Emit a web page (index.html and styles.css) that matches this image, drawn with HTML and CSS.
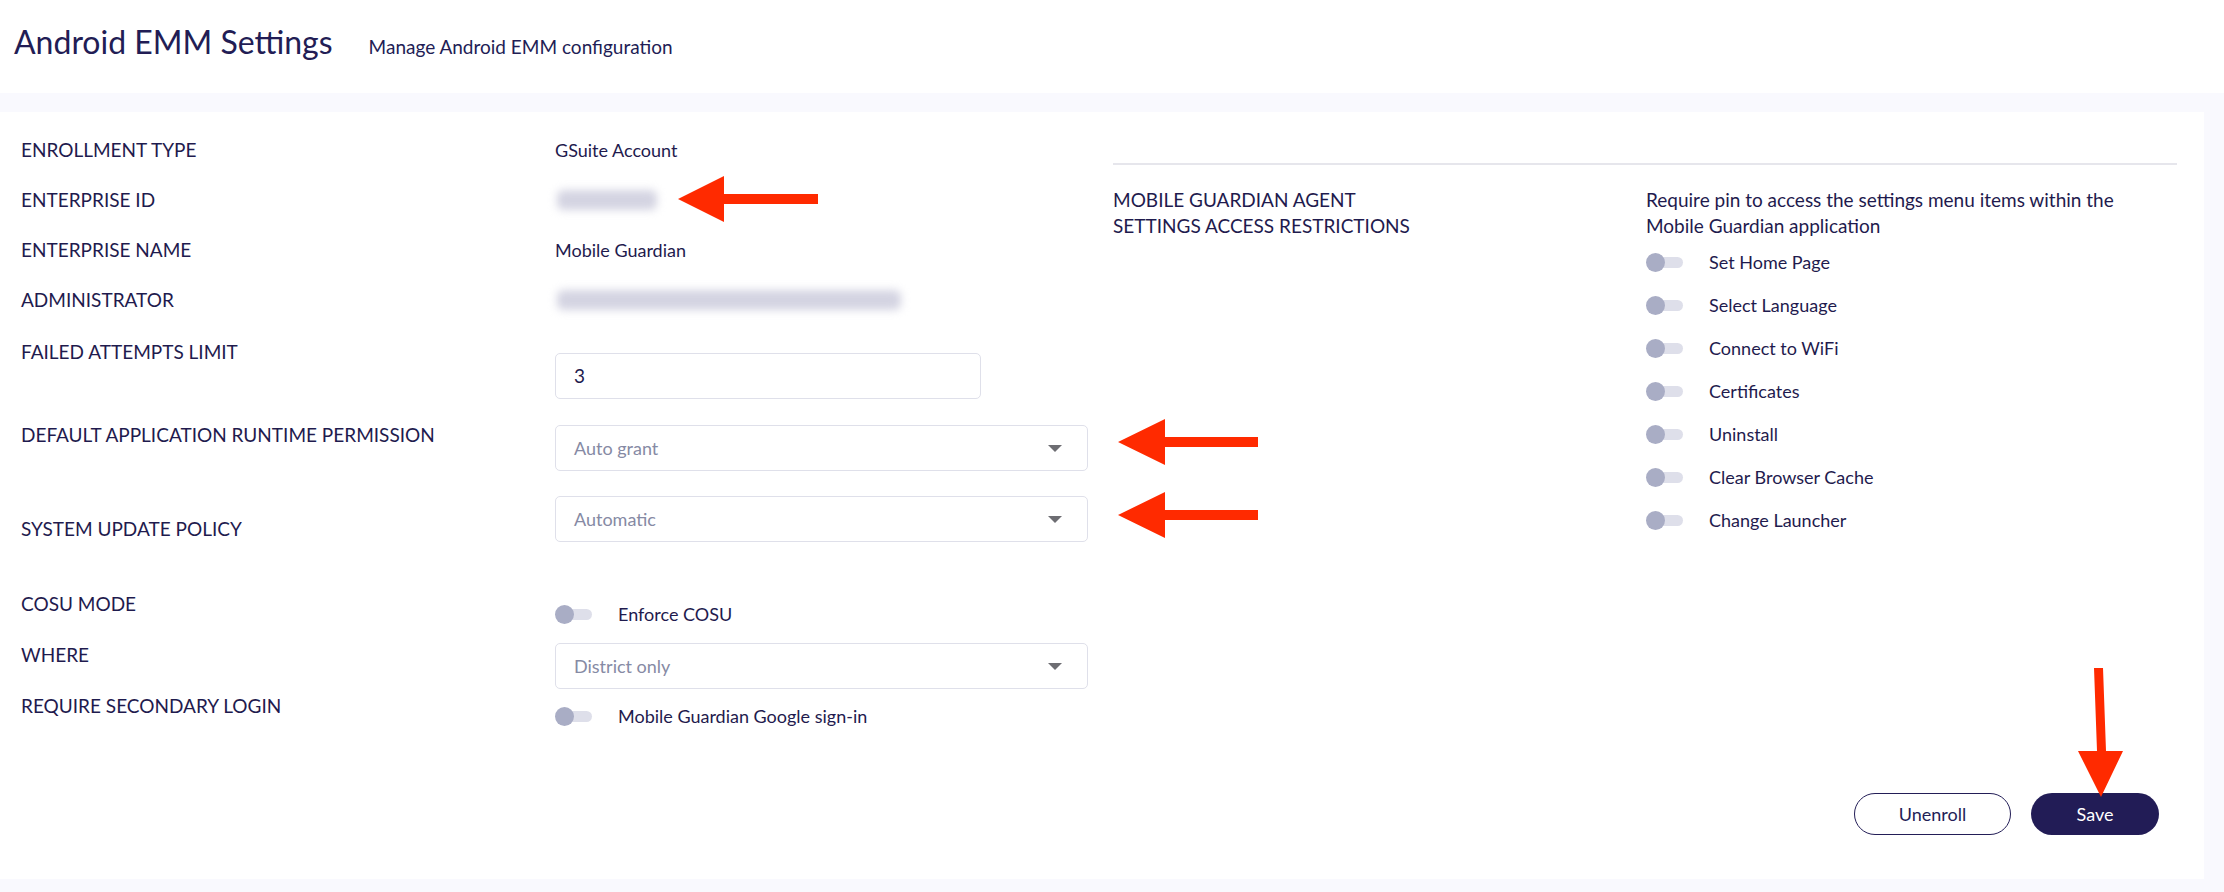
FILE: index.html
```html
<!DOCTYPE html>
<html lang="en">
<head>
<meta charset="utf-8">
<title>Android EMM Settings</title>
<link rel="stylesheet" href="styles.css">
</head>
<body>
<header class="page-header">
  <h1 class="page-title">Android EMM Settings</h1>
  <span class="page-subtitle">Manage Android EMM configuration</span>
</header>
<main class="page-body">
  <section class="card">
    <div class="columns">
      <div class="form-left">
        <div class="row r1"><div class="label">ENROLLMENT TYPE</div><div class="value">GSuite Account</div></div>
        <div class="row r2"><div class="label">ENTERPRISE ID</div><div class="value"><span class="blurred blur-id"></span></div></div>
        <div class="row r3"><div class="label">ENTERPRISE NAME</div><div class="value">Mobile Guardian</div></div>
        <div class="row r4"><div class="label">ADMINISTRATOR</div><div class="value"><span class="blurred blur-admin"></span></div></div>
        <div class="row r5"><div class="label">FAILED ATTEMPTS LIMIT</div><div class="value"><div class="text-input">3</div></div></div>
        <div class="row r6"><div class="label">DEFAULT APPLICATION RUNTIME PERMISSION</div><div class="value"><div class="select">Auto grant<span class="caret"></span></div></div></div>
        <div class="row r7"><div class="label">SYSTEM UPDATE POLICY</div><div class="value"><div class="select">Automatic<span class="caret"></span></div></div></div>
        <div class="row r8"><div class="label">COSU MODE</div><div class="value"><div class="toggle-row"><span class="toggle"></span><span>Enforce COSU</span></div></div></div>
        <div class="row r9"><div class="label">WHERE</div><div class="value"><div class="select">District only<span class="caret"></span></div></div></div>
        <div class="row r10"><div class="label">REQUIRE SECONDARY LOGIN</div><div class="value"><div class="toggle-row"><span class="toggle"></span><span>Mobile Guardian Google sign-in</span></div></div></div>
      </div>
      <div class="form-right">
        <div class="divider"></div>
        <div class="agent-row">
          <div class="agent-label">MOBILE GUARDIAN AGENT<br>SETTINGS ACCESS RESTRICTIONS</div>
          <div class="agent-options">
            <p class="agent-desc">Require pin to access the settings menu items within the<br>Mobile Guardian application</p>
            <ul class="option-list">
              <li class="toggle-row"><span class="toggle"></span><span>Set Home Page</span></li>
              <li class="toggle-row"><span class="toggle"></span><span>Select Language</span></li>
              <li class="toggle-row"><span class="toggle"></span><span>Connect to WiFi</span></li>
              <li class="toggle-row"><span class="toggle"></span><span>Certificates</span></li>
              <li class="toggle-row"><span class="toggle"></span><span>Uninstall</span></li>
              <li class="toggle-row"><span class="toggle"></span><span>Clear Browser Cache</span></li>
              <li class="toggle-row"><span class="toggle"></span><span>Change Launcher</span></li>
            </ul>
          </div>
        </div>
      </div>
    </div>
    <div class="actions">
      <button class="btn btn-outline">Unenroll</button>
      <button class="btn btn-primary">Save</button>
    </div>
  </section>
</main>
<svg class="annotations" width="2224" height="892" viewBox="0 0 2224 892" aria-hidden="true">
  <polygon class="arrow" points="678,199 724,176 724,194 818,194 818,204 724,204 724,222"/>
  <polygon class="arrow" points="1118,442 1165,419 1165,437 1258,437 1258,447 1165,447 1165,465"/>
  <polygon class="arrow" points="1118,515 1165,492 1165,510 1258,510 1258,520 1165,520 1165,538"/>
  <polygon class="arrow" points="2094,668 2103,668 2106,751 2123,751 2101,797 2078,751 2097,751"/>
</svg>
</body>
</html>
```
FILE: styles.css
```css
* { box-sizing: border-box; }
html, body { margin: 0; padding: 0; }
body {
  width: 2224px;
  height: 892px;
  overflow: hidden;
  position: relative;
  background: #f9f9fe;
  font-family: Lato, "Noto Sans", sans-serif;
  color: #1f1b4e;
}
.page-header {
  height: 93px;
  background: #ffffff;
  display: flex;
  align-items: baseline;
  padding: 22px 0 0 14px;
}
.page-title {
  margin: 0;
  font-size: 32px;
  font-weight: 400;
  line-height: 40px;
  color: #221d55;
}
.page-subtitle {
  margin-left: 36px;
  font-size: 19px;
  color: #221d55;
}
.page-body {
  padding: 19px 20px 0 0;
}
.card {
  background: #ffffff;
  height: 767px;
  padding: 25px 27px 0 21px;
}
.columns {
  display: grid;
  grid-template-columns: 1067px 1064px;
  column-gap: 25px;
}
.row {
  display: grid;
  grid-template-columns: 534px 533px;
  align-items: start;
  line-height: 26px;
  font-size: 18px;
}
.label { font-size: 19px; color: #1f1b4e; }
.value { font-size: 18px; color: #1f1b4e; }
.r2, .r3, .r4 { margin-top: 24px; }
.r5 { margin-top: 26px; }
.r5 .value { margin-top: 14px; }
.r6 { margin-top: 23px; }
.r6 .value { margin-top: 3px; }
.r7 { margin-top: 25px; }
.r7 .label { align-self: end; }
.r8 { margin-top: 49px; }
.r8 .value { margin-top: 10px; }
.r9 { margin-top: 15px; }
.r9 .value { margin-top: 1px; }
.r10 { margin-top: 4px; }
.r10 .value { margin-top: 10px; }
.blurred {
  display: block;
  height: 20px;
  margin-top: 3px;
  background: #d4d4e2;
  filter: blur(4px);
  border-radius: 6px;
}
.blur-id { width: 100px; margin-left: 2px; }
.blur-admin { width: 344px; margin-left: 2px; }
.text-input {
  width: 426px;
  height: 46px;
  border: 1px solid #dfe0ea;
  border-radius: 5px;
  padding-left: 18px;
  line-height: 44px;
  font-size: 19px;
  color: #1f1b4e;
}
.select {
  position: relative;
  width: 533px;
  height: 46px;
  border: 1px solid #dfe0ea;
  border-radius: 5px;
  padding-left: 18px;
  line-height: 44px;
  font-size: 18px;
  color: #868aa4;
}
.caret {
  position: absolute;
  right: 25px;
  top: 19px;
  width: 0;
  height: 0;
  border-left: 7px solid transparent;
  border-right: 7px solid transparent;
  border-top: 7px solid #6d6d72;
}
.toggle-row {
  display: flex;
  align-items: center;
  height: 26px;
  font-size: 18px;
  color: #1f1b4e;
}
.toggle {
  position: relative;
  flex: none;
  width: 37px;
  height: 26px;
  margin-right: 26px;
}
.toggle::before {
  content: "";
  position: absolute;
  left: 4px;
  right: 0;
  top: 8px;
  height: 11px;
  border-radius: 6px;
  background: #dedfea;
}
.toggle::after {
  content: "";
  position: absolute;
  left: 0;
  top: 4px;
  width: 19px;
  height: 19px;
  border-radius: 50%;
  background: #a9adc5;
}
.form-right { padding-top: 26px; }
.divider {
  height: 2px;
  background: #e6e6ec;
}
.agent-row {
  display: grid;
  grid-template-columns: 533px 1fr;
  margin-top: 22px;
  line-height: 26px;
  font-size: 19px;
}
.agent-label { color: #1f1b4e; }
.agent-desc { margin: 0; color: #1f1b4e; }
.option-list {
  list-style: none;
  margin: 10px 0 0;
  padding: 0;
  display: flex;
  flex-direction: column;
  gap: 17px;
}
.actions {
  display: flex;
  justify-content: flex-end;
  gap: 20px;
  margin-top: 64px;
  padding-right: 18px;
}
.btn {
  height: 42px;
  border-radius: 21px;
  font-family: Lato, "Noto Sans", sans-serif;
  font-size: 18px;
  cursor: pointer;
}
.btn-outline {
  width: 157px;
  background: #ffffff;
  border: 1.5px solid #231e57;
  color: #231e57;
}
.btn-primary {
  width: 128px;
  background: #221c56;
  border: none;
  color: #ffffff;
}
.annotations {
  position: absolute;
  left: 0;
  top: 0;
  pointer-events: none;
}
.arrow { fill: #ff2a00; }
```
